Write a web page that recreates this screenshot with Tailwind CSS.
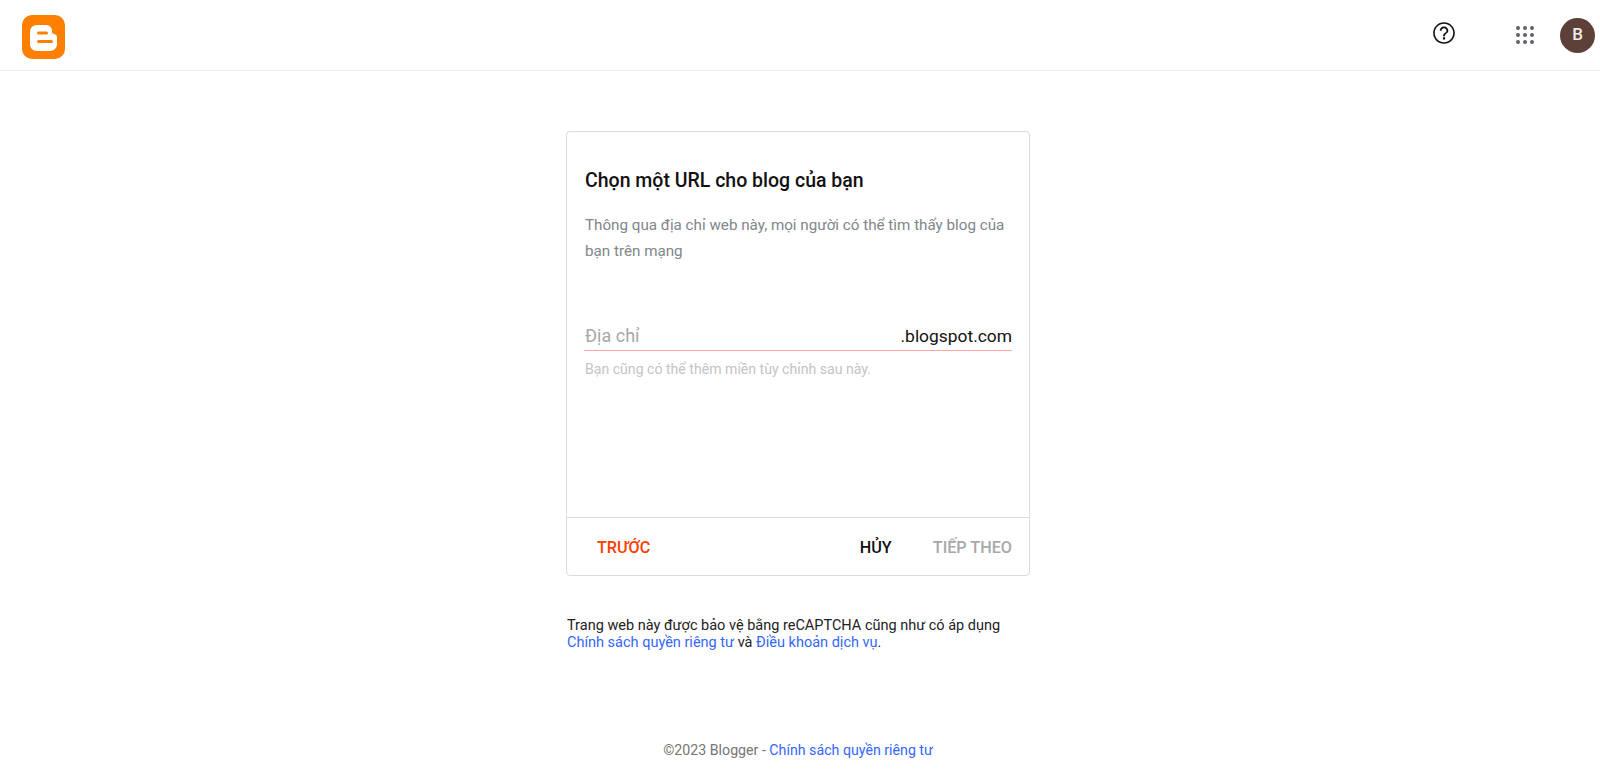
<!DOCTYPE html>
<html lang="vi">
<head>
  <meta charset="UTF-8" />
  <meta name="viewport" content="width=device-width, initial-scale=1.0" />
  <title>Blogger</title>
  <script src="https://cdn.jsdelivr.net/npm/@tailwindcss/browser@4"></script>
</head>
<body class="bg-white font-['Roboto',sans-serif] overflow-hidden">

  <header class="h-[71px] border-b border-[#eeeeee] flex items-center justify-between pl-[22px] pr-[5px]">
    <svg class="w-[43px] h-[44px] mt-[4px]" viewBox="0 0 43 44">
      <rect width="43" height="44" rx="10" fill="#ff8000"/>
      <path d="M15 10h9c3.500 0 6 2.500 6 6v1c0 1.200.8 1.800 2 2 2 .4 3 1.500 3 3.500V29c0 4-3 7-7 7H15c-4 0-7-3-7-7V17c0-4 3-7 7-7z" fill="#fff"/>
      <rect x="15" y="16.500" width="11" height="3" rx="1.500" fill="#ff8000"/>
      <rect x="15" y="25" width="16" height="3" rx="1.500" fill="#ff8000"/>
    </svg>
    <div class="flex items-center">
      <svg class="w-[26px] h-[26px] mr-[59px] mb-[4px]" viewBox="0 0 24 24" fill="#111111">
        <path d="M11 18h2v-2h-2v2zm1-16C6.480 2 2 6.480 2 12s4.480 10 10 10 10-4.480 10-10S17.520 2 12 2zm0 18.500c-4.690 0-8.500-3.810-8.500-8.500S7.310 3.500 12 3.500s8.500 3.810 8.500 8.500-3.810 8.500-8.500 8.500zM12 6c-2.210 0-4 1.790-4 4h1.700c0-1.270 1.030-2.300 2.300-2.300s2.300 1.030 2.300 2.300c0 2-3.150 1.900-3.150 5h1.700c0-2.250 3.150-2.600 3.150-5 0-2.210-1.790-4-4-4z"/>
      </svg>
      <svg class="w-[18px] h-[18px] mr-[26px]" viewBox="0 0 18 18" fill="#5f6368">
        <circle cx="2" cy="2" r="2"/><circle cx="9" cy="2" r="2"/><circle cx="16" cy="2" r="2"/>
        <circle cx="2" cy="9" r="2"/><circle cx="9" cy="9" r="2"/><circle cx="16" cy="9" r="2"/>
        <circle cx="2" cy="16" r="2"/><circle cx="9" cy="16" r="2"/><circle cx="16" cy="16" r="2"/>
      </svg>
      <div class="w-[35px] h-[35px] rounded-full bg-[#5d4037] text-[#f1ebe8] text-[17px] font-medium flex items-center justify-center">B</div>
    </div>
  </header>

  <main class="flex flex-col items-center pr-[4px]">
    <div class="w-[464px] mt-[60px] border border-[#dadce0] rounded-[4px] bg-white">
      <div class="h-[385px] px-[18px] pt-[37px]">
        <h1 class="text-[19.500px] leading-[24px] font-medium text-[#111111]">Chọn một URL cho blog của bạn</h1>
        <p class="mt-[19px] text-[15.200px] leading-[26px] text-[#80868b]">Thông qua địa chỉ web này, mọi người có thể tìm thấy blog của bạn trên mạng</p>
        <div class="mt-[56px] -mx-[1px] pl-[1px] flex items-end justify-between h-[31px] border-b border-[#f8a9a0] text-[17.400px] leading-[28px]">
          <span class="text-[#a8a8a8] text-[18px]">Địa chỉ</span>
          <span class="text-[#111111]">.blogspot.com</span>
        </div>
        <p class="mt-[9px] text-[14.100px] leading-[18px] text-[#c4c4c4]">Bạn cũng có thể thêm miền tùy chỉnh sau này.</p>
      </div>
      <div class="h-[58px] pt-[3px] border-t border-[#dadce0] flex items-center justify-between pl-[30px] pr-[17px] text-[16.200px] font-medium">
        <span class="text-[#ff3d00]">TRƯỚC</span>
        <div class="flex gap-[41px]">
          <span class="text-[#111111]">HỦY</span>
          <span class="text-[#a8a8a8]">TIẾP THEO</span>
        </div>
      </div>
    </div>

    <p class="w-[464px] mt-[41px] text-[14.500px] leading-[17px] text-[#222222] pl-[1px]">
      Trang web này được bảo vệ bằng reCAPTCHA cũng như có áp dụng<br />
      <a class="text-[#3367ff]">Chính sách quyền riêng tư</a> và <a class="text-[#3367ff]">Điều khoản dịch vụ</a>.
    </p>

    <footer class="mt-[90px] text-[14.200px] leading-[18px] text-[#757575]">
      ©2023 Blogger - <a class="text-[#3367ff]">Chính sách quyền riêng tư</a>
    </footer>
  </main>
</body>
</html>
